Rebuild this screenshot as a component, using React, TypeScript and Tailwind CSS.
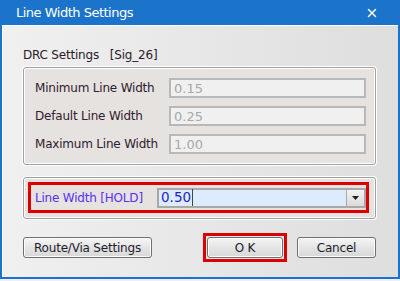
import { X } from 'lucide-react';

const FONT = "font-['DejaVu_Sans',sans-serif]";

function ReadOnlyRow({ label, value }: { label: string; value: string }) {
  return (
    <div className="flex items-center h-[20px]">
      <span className="w-[134px] text-[12px] text-[#2e202e] whitespace-nowrap tracking-[-0.2px]">{label}</span>
      <div className="w-[197px] h-[20px] border-2 border-[#b8b8b8] bg-[#f0f0f0] flex items-center px-[3px] text-[13px] text-[#a8a8a8] leading-none">
        {value}
      </div>
    </div>
  );
}

function Button({ children, className = '' }: { children: React.ReactNode; className?: string }) {
  return (
    <div
      className={`h-[21px] rounded-[3px] border border-[#707070] bg-[linear-gradient(#f6f6f6,#e4e4e4_50%,#d8d8d8)] shadow-[inset_0_0_0_1px_#fbfbfb] flex items-center justify-center text-[12px] text-[#1c1c2c] tracking-[-0.2px] whitespace-pre ${className}`}
    >
      {children}
    </div>
  );
}

export default function App() {
  return (
    <div className={`w-[400px] h-[281px] bg-[#eef0f4] ${FONT}`}>
      <div className="h-[279px] flex flex-col border-x-2 border-b-2 border-[#1b74c9] bg-[#1b74c9]">
        {/* Title bar */}
        <div className="h-[25px] -mx-[2px] px-[16px] flex items-center justify-between text-white">
          <span className="text-[13px] tracking-[-0.5px]">Line Width Settings</span>
          <X size={14} strokeWidth={2.5} className="mr-[5px]" />
        </div>

        {/* Body */}
        <div className="flex-1 border-l border-t border-white bg-[linear-gradient(90deg,#f0f0f0,#dedede)] pl-[20px] pr-[22px] pt-[22px]">
          <div className="h-[14px] flex items-center text-[12px] text-[#2a1a2a] tracking-[-0.2px] whitespace-pre">
            DRC Settings   [Sig_26]
          </div>

          <div className="mt-[5px] h-[98px] rounded-[3px] border border-[#a0a0a0] shadow-[inset_0_0_0_1px_#ffffff,0_0_0_1px_#ffffff] bg-[#e6e2e0] pl-[11px] pt-[10px] flex flex-col gap-[8px]">
            <ReadOnlyRow label="Minimum Line Width" value="0.15" />
            <ReadOnlyRow label="Default Line Width" value="0.25" />
            <ReadOnlyRow label="Maximum Line Width" value="1.00" />
          </div>

          <div className="mt-[12px] h-[42px] rounded-[3px] border border-[#a0a0a0] shadow-[inset_0_0_0_1px_#ffffff,0_0_0_1px_#ffffff] bg-[#e6e2e0] pl-[4px] pr-[6px] pt-[4px]">
            <div className="h-[31px] border-[3px] border-[#dd0000] flex items-center pl-[4px]">
              <span className="w-[122px] text-[12px] text-[#5a30f0] tracking-[-0.2px] whitespace-nowrap">Line Width [HOLD]</span>
              <div className="w-[209px] h-[20px] border-2 border-[#a8a8a8] bg-[#dcecfc] flex items-stretch">
                <div className="flex-1 flex items-center pl-[2px] text-[13.5px] text-[#2424c8] leading-none">
                  0.50<span className="ml-[1px] w-px h-[17px] bg-[#444]" />
                </div>
                <div className="w-[18px] border-l border-[#a8a8a8] bg-[linear-gradient(#f4f4f4,#dadada)] flex items-center justify-center">
                  <svg width="7" height="4" viewBox="0 0 7 4">
                    <path d="M0 0h7L3.5 4z" fill="#202020" />
                  </svg>
                </div>
              </div>
            </div>
          </div>

          <div className="mt-[14px] flex items-center">
            <Button className="w-[129px]">Route/Via Settings</Button>
            <div className="ml-[51px] w-[84px] h-[29px] border-[3px] border-[#dd0000] p-[1px] flex">
              <Button className="flex-1">O K</Button>
            </div>
            <Button className="ml-[10px] w-[79px]">Cancel</Button>
          </div>
        </div>
      </div>
    </div>
  );
}
